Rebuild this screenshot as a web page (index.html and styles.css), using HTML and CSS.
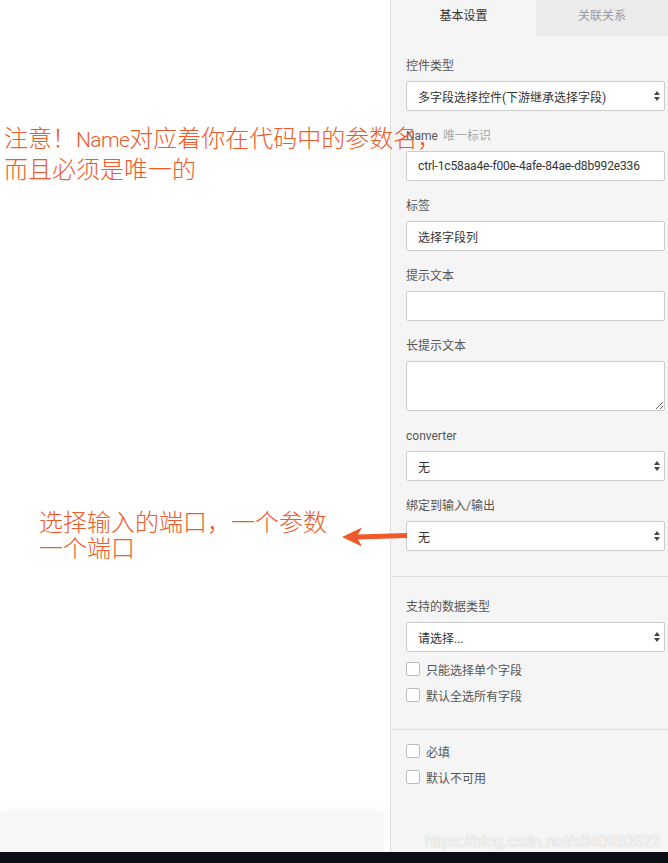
FILE: index.html
```html
<!DOCTYPE html>
<html lang="zh-CN">
<head>
<meta charset="utf-8">
<title>控件设置</title>
<link rel="stylesheet" href="styles.css">
</head>
<body>
<div class="screen">
  <div class="workspace">
    <div class="canvas">
      <div class="canvas-footer"></div>
    </div>
    <aside class="panel">
      <div class="tabs">
        <div class="tab active">基本设置</div>
        <div class="tab">关联关系</div>
      </div>
      <section class="section">
        <div class="field">
          <div class="label">控件类型</div>
          <div class="input select"><span>多字段选择控件(下游继承选择字段)</span><svg class="updown" viewBox="0 0 6 10" width="6" height="10"><path d="M0 4 L3 0 L6 4 Z M0 6 L3 10 L6 6 Z" fill="#444"/></svg></div>
        </div>
        <div class="field">
          <div class="label">Name <span class="hint">唯一标识</span></div>
          <div class="input mono-ish">ctrl-1c58aa4e-f00e-4afe-84ae-d8b992e336</div>
        </div>
        <div class="field">
          <div class="label">标签</div>
          <div class="input">选择字段列</div>
        </div>
        <div class="field">
          <div class="label">提示文本</div>
          <div class="input"></div>
        </div>
        <div class="field">
          <div class="label">长提示文本</div>
          <textarea class="input textarea"></textarea>
        </div>
        <div class="field">
          <div class="label">converter</div>
          <div class="input select"><span>无</span><svg class="updown" viewBox="0 0 6 10" width="6" height="10"><path d="M0 4 L3 0 L6 4 Z M0 6 L3 10 L6 6 Z" fill="#444"/></svg></div>
        </div>
        <div class="field">
          <div class="label">绑定到输入/输出</div>
          <div class="input select"><span>无</span><svg class="updown" viewBox="0 0 6 10" width="6" height="10"><path d="M0 4 L3 0 L6 4 Z M0 6 L3 10 L6 6 Z" fill="#444"/></svg></div>
        </div>
      </section>
      <section class="section section-types">
        <div class="field field-tight">
          <div class="label">支持的数据类型</div>
          <div class="input select"><span>请选择...</span><svg class="updown" viewBox="0 0 6 10" width="6" height="10"><path d="M0 4 L3 0 L6 4 Z M0 6 L3 10 L6 6 Z" fill="#444"/></svg></div>
        </div>
        <div class="check"><span class="box"></span><span>只能选择单个字段</span></div>
        <div class="check"><span class="box"></span><span>默认全选所有字段</span></div>
      </section>
      <section class="section section-flags">
        <div class="check"><span class="box"></span><span>必填</span></div>
        <div class="check"><span class="box"></span><span>默认不可用</span></div>
      </section>
    </aside>
  </div>
  <div class="taskbar"></div>

  <div class="note note-name">注意！<span class="latin">Name</span>对应着你在代码中的参数名，<br>而且必须是唯一的</div>
  <div class="note note-port">选择输入的端口，一个参数<br>一个端口</div>
  <svg class="arrow" viewBox="0 0 70 24" width="70" height="24"><polygon points="2,13 22,3.5 18,10.5 67,9 67,14 18,15.5 22,22.5" fill="#ee5a2a"/></svg>
  <div class="watermark">https://blog.csdn.net/s840993622</div>
</div>
</body>
</html>
```

FILE: styles.css
```css
* { box-sizing: border-box; }

html, body {
  margin: 0;
  padding: 0;
  background: #ffffff;
}

body {
  font-family: Roboto, "Noto Sans CJK SC", sans-serif;
  font-size: 12px;
  color: #333;
}

.screen {
  position: relative;
  width: 668px;
  height: 863px;
  overflow: hidden;
}

.workspace {
  display: flex;
  height: 852px;
}

.canvas {
  flex: 1;
  display: flex;
  flex-direction: column;
  justify-content: flex-end;
  background: #fff;
}

.canvas-footer {
  width: 384px;
  height: 40px;
  background: #f7f7f7;
  box-shadow: 0 -5px 10px rgba(0, 0, 0, 0.025);
}

.panel {
  width: 278px;
  flex: none;
  border-left: 1px solid #e0e0e0;
  background: #f5f5f5;
}

.tabs {
  display: flex;
  height: 36px;
}

.tab {
  flex: 1;
  text-align: center;
  line-height: 33px;
  font-size: 12px;
  color: #9a9a9a;
  background: #ebebeb;
}

.tab.active {
  flex: none;
  width: 145px;
  color: #333;
  background: #f5f5f5;
}

.section {
  padding: 20px 3px 10px 15px;
}

.section + .section {
  border-top: 1px solid #dddddd;
}

.section-types {
  padding-bottom: 21px;
}

.section-flags {
  padding-top: 8px;
}

.field {
  margin-bottom: 15px;
}

.field-tight {
  margin-bottom: 4px;
}

.label {
  line-height: 20px;
  margin-bottom: 5px;
  font-size: 12px;
  color: #555;
  white-space: nowrap;
}

.hint {
  color: #a8a8a8;
  margin-left: 2px;
}

.input {
  display: flex;
  align-items: center;
  width: 100%;
  height: 30px;
  padding: 0 11px;
  background: #fff;
  border: 1px solid #cccccc;
  border-radius: 2px;
  font-family: Roboto, "Noto Sans CJK SC", sans-serif;
  font-size: 12px;
  color: #333;
  white-space: nowrap;
}

.mono-ish {
  letter-spacing: -0.15px;
}

.select {
  justify-content: space-between;
  padding-right: 4px;
}

.updown {
  display: block;
  flex: none;
}

.textarea {
  display: block;
  height: 50px;
  resize: vertical;
  margin: 0;
  outline: none;
}

.check {
  display: flex;
  align-items: center;
  gap: 6px;
  height: 26px;
  font-size: 12px;
  color: #555;
}

.box {
  width: 14px;
  height: 14px;
  flex: none;
  background: #fff;
  border: 1px solid #bdbdbd;
  border-radius: 2px;
}

.taskbar {
  position: relative;
  z-index: 2;
  height: 11px;
  background: #0c0e16;
}

.note {
  position: absolute;
  z-index: 3;
  color: #ee5a2a;
  font-family: "Noto Sans CJK SC", sans-serif;
  font-weight: 300;
  font-size: 24px;
  white-space: nowrap;
}

.note-name {
  left: 4px;
  top: 123px;
  line-height: 27px;
}

.note-port {
  left: 39px;
  top: 508px;
  line-height: 26px;
}

.latin {
  font-family: Roboto, sans-serif;
  font-weight: 300;
  font-size: 21px;
  letter-spacing: -0.6px;
}

.arrow {
  position: absolute;
  z-index: 3;
  left: 340px;
  top: 524px;
}

.watermark {
  position: absolute;
  z-index: 1;
  left: 425px;
  top: 833px;
  font-family: "Liberation Sans", Arial, sans-serif;
  font-size: 16px;
  color: rgba(255, 255, 255, 0.9);
  text-shadow: 0 0 1px rgba(0, 0, 0, 0.3);
  white-space: nowrap;
}
```
